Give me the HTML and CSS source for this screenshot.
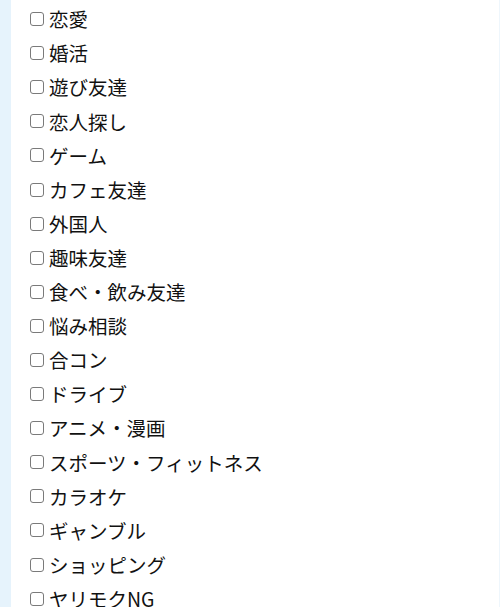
FILE: index.html
```html
<!DOCTYPE html>
<html lang="ja">
<head>
<meta charset="utf-8">
<link rel="stylesheet" href="styles.css">
</head>
<body>
<div class="panel">
  <ul class="tag-list">
    <li><label class="tag"><input type="checkbox" class="tag-check"><span>恋愛</span></label></li>
    <li><label class="tag"><input type="checkbox" class="tag-check"><span>婚活</span></label></li>
    <li><label class="tag"><input type="checkbox" class="tag-check"><span>遊び友達</span></label></li>
    <li><label class="tag"><input type="checkbox" class="tag-check"><span>恋人探し</span></label></li>
    <li><label class="tag"><input type="checkbox" class="tag-check"><span>ゲーム</span></label></li>
    <li><label class="tag"><input type="checkbox" class="tag-check"><span>カフェ友達</span></label></li>
    <li><label class="tag"><input type="checkbox" class="tag-check"><span>外国人</span></label></li>
    <li><label class="tag"><input type="checkbox" class="tag-check"><span>趣味友達</span></label></li>
    <li><label class="tag"><input type="checkbox" class="tag-check"><span>食べ・飲み友達</span></label></li>
    <li><label class="tag"><input type="checkbox" class="tag-check"><span>悩み相談</span></label></li>
    <li><label class="tag"><input type="checkbox" class="tag-check"><span>合コン</span></label></li>
    <li><label class="tag"><input type="checkbox" class="tag-check"><span>ドライブ</span></label></li>
    <li><label class="tag"><input type="checkbox" class="tag-check"><span>アニメ・漫画</span></label></li>
    <li><label class="tag"><input type="checkbox" class="tag-check"><span>スポーツ・フィットネス</span></label></li>
    <li><label class="tag"><input type="checkbox" class="tag-check"><span>カラオケ</span></label></li>
    <li><label class="tag"><input type="checkbox" class="tag-check"><span>ギャンブル</span></label></li>
    <li><label class="tag"><input type="checkbox" class="tag-check"><span>ショッピング</span></label></li>
    <li><label class="tag"><input type="checkbox" class="tag-check"><span>ヤリモクNG</span></label></li>
  </ul>
</div>
</body>
</html>
```
FILE: styles.css
```css
html, body {
  margin: 0;
  padding: 0;
  background: #ffffff;
}

body {
  font-family: "Noto Sans CJK JP", "Noto Sans", sans-serif;
  color: #111111;
  height: 607px;
  overflow: hidden;
}

.panel {
  border-left: 11px solid #e6f3fc;
  border-right: 1px solid #eef6fc;
  min-height: 607px;
  box-sizing: border-box;
  padding: 2px 0 0 19px;
}

.tag-list {
  list-style: none;
  margin: 0;
  padding: 0;
}

.tag-list li {
  height: 34.1px;
  display: flex;
  align-items: center;
}

.tag {
  display: flex;
  align-items: center;
  font-size: 19.5px;
  line-height: 1;
}

.tag-check {
  appearance: none;
  -webkit-appearance: none;
  width: 14px;
  height: 14px;
  margin: 0 5px 0 0;
  border: 1px solid #7a7a7a;
  border-radius: 3px;
  background: #fff;
  box-sizing: border-box;
}
```
